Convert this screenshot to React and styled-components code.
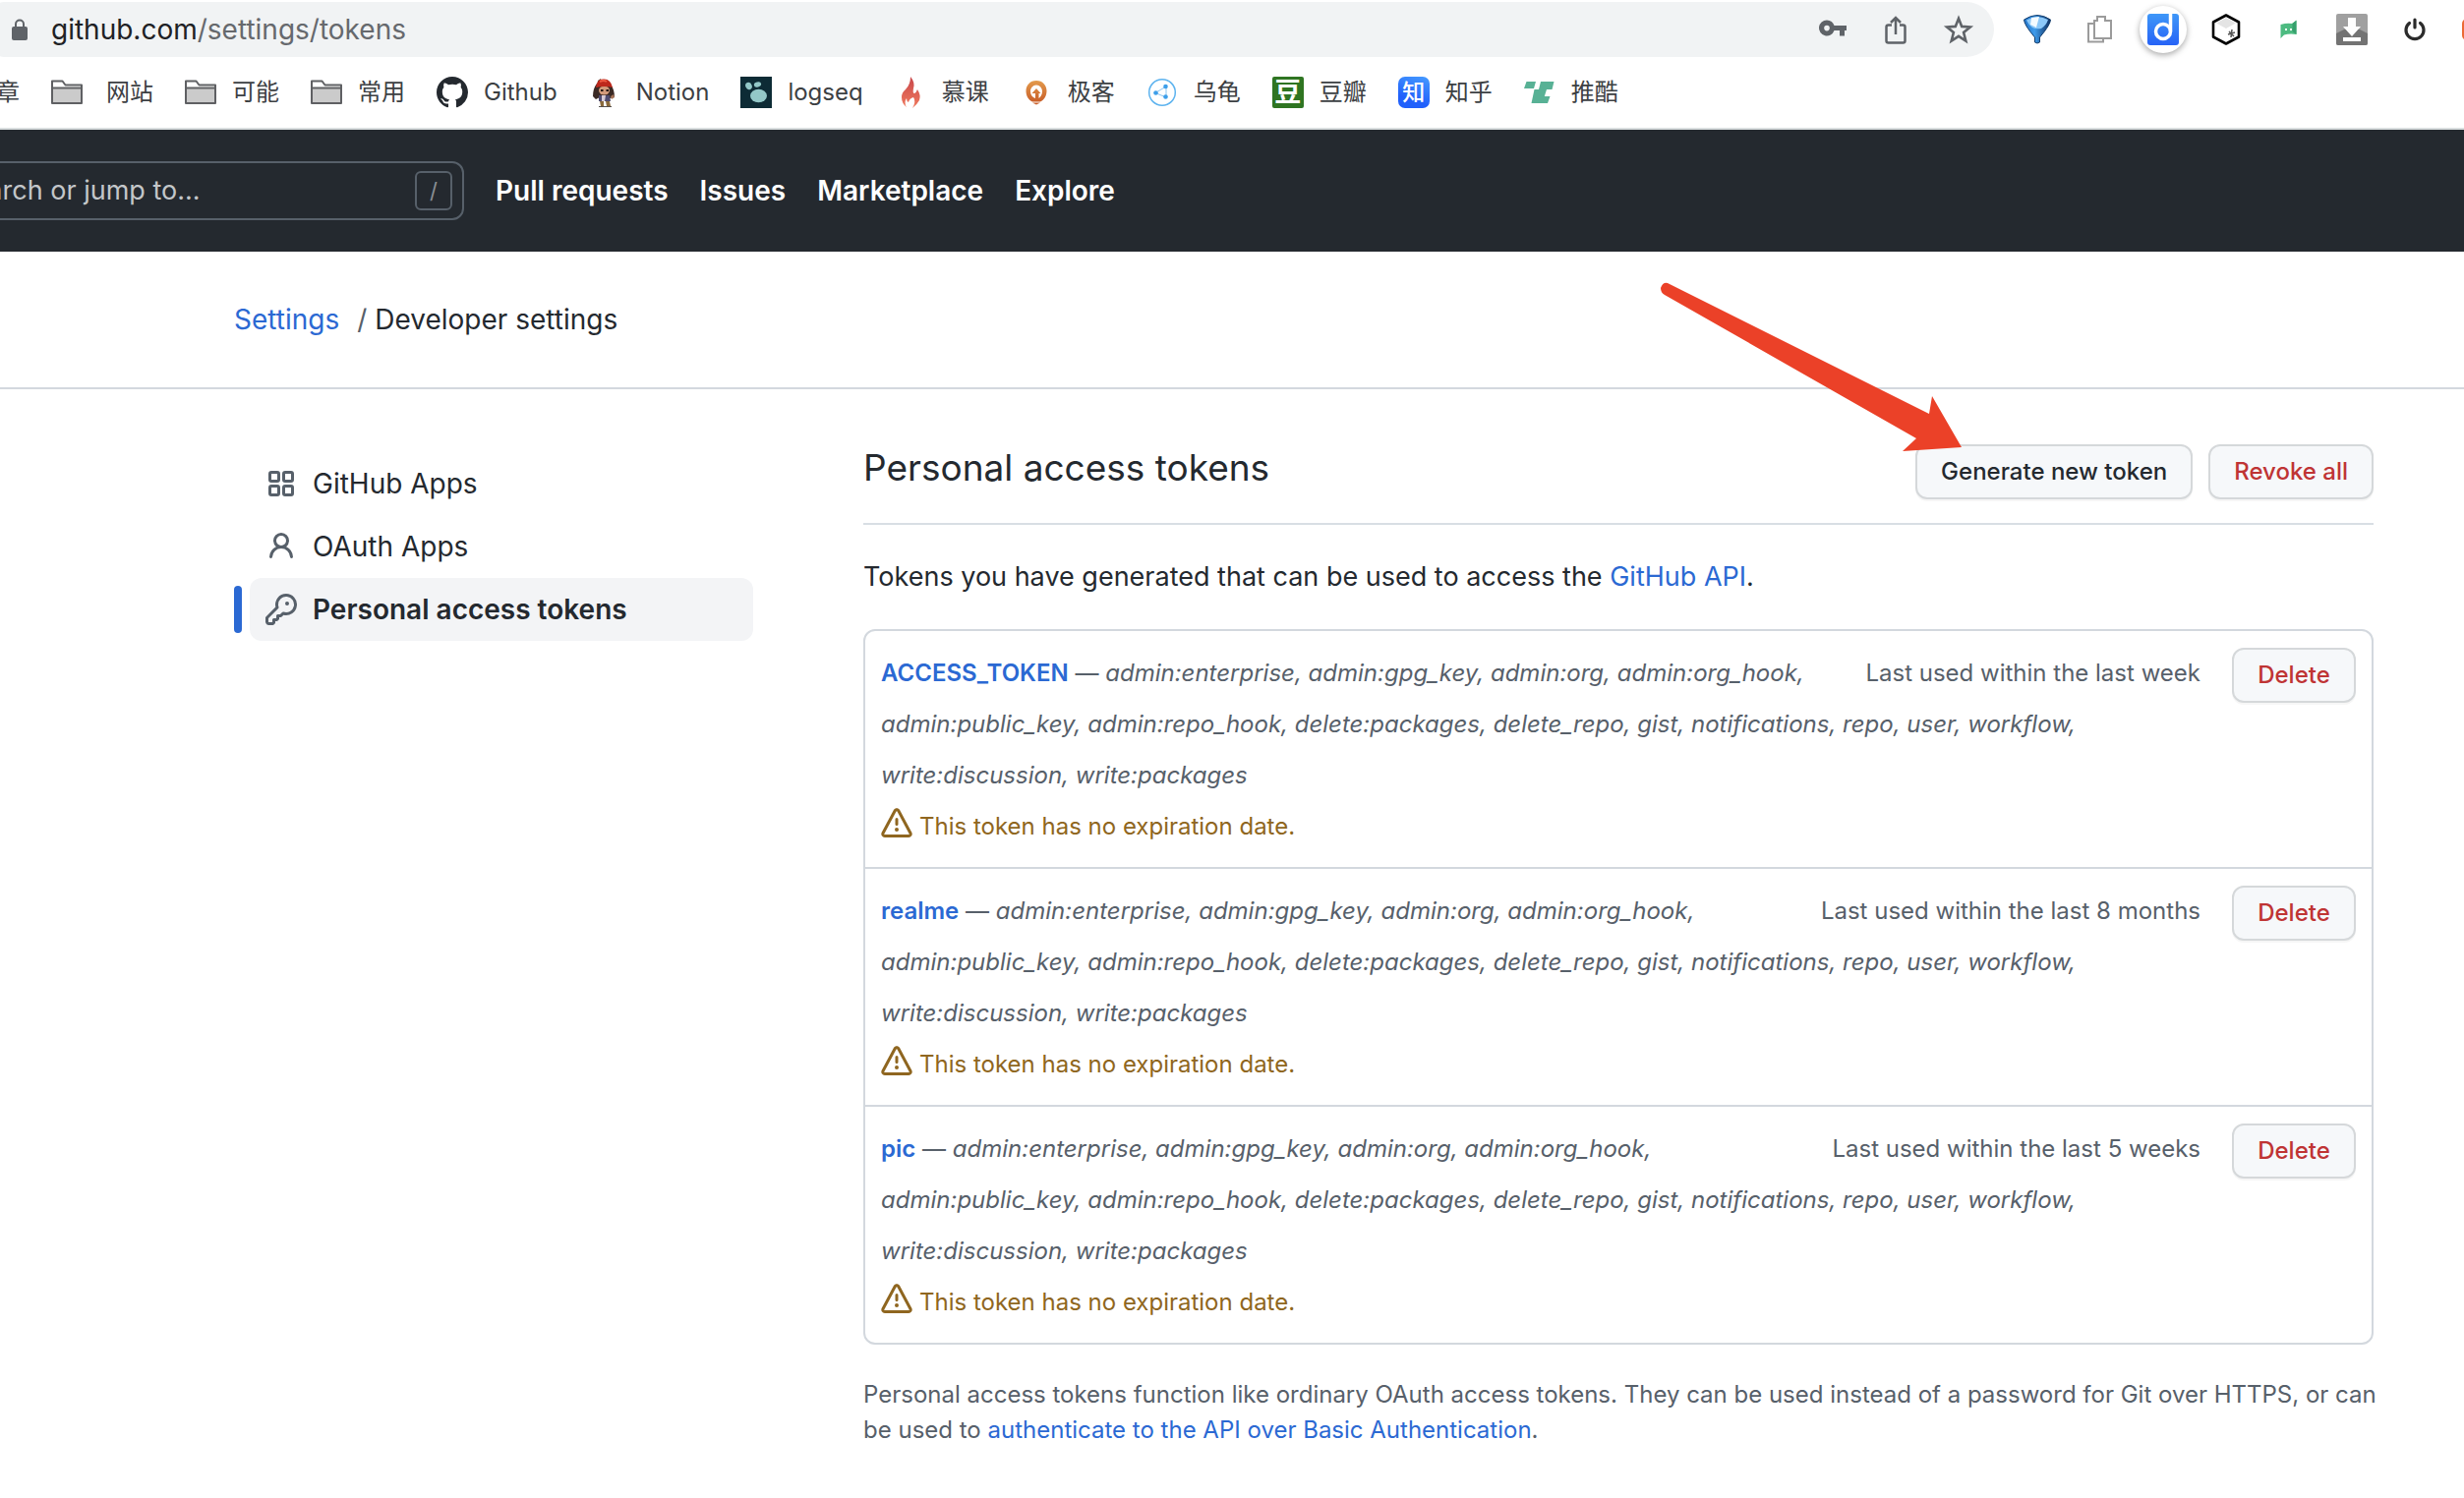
import React from "react";
import styled, { createGlobalStyle, css } from "styled-components";

const color = {
  text: "#24292f",
  muted: "#57606a",
  link: "#2b69d3",
  danger: "#bf3434",
  warning: "#8f6620",
  border: "#d3d8de",
  subtle: "#f6f8fa",
};

const GlobalStyle = createGlobalStyle`
  *, *::before, *::after { box-sizing: border-box; }
  body {
    margin: 0;
    background: #fff;
    color: ${color.text};
    font-family: Inter, "Noto Sans CJK SC", "Liberation Sans", sans-serif;
    font-size: 28px;
    line-height: 42px;
    overflow-x: hidden;
  }
  svg { display: block; flex: none; }
`;

const Icon = styled.svg`
  width: 32px;
  height: 32px;
`;

const IconButton = styled.button`
  display: grid;
  place-items: center;
  flex: none;
  width: ${(p) => (p.$round ? 48 : 32)}px;
  height: ${(p) => (p.$round ? 48 : 32)}px;
  margin: ${(p) => (p.$round ? "0 -8px" : "0")};
  padding: 0;
  border: 0;
  border-radius: ${(p) => (p.$round ? "50%" : "0")};
  background: ${(p) => (p.$round ? "#fff" : "none")};
  box-shadow: ${(p) => (p.$round ? "0 2px 6px rgba(0, 0, 0, 0.35)" : "none")};
`;

/* Browser chrome */

const Chrome = styled.div`
  border-bottom: 2px solid #d9dedf;
  overflow: hidden;
`;

const Toolbar = styled.div`
  display: flex;
  gap: 28px;
  padding-top: 2px;
`;

const AddressBar = styled.div`
  display: flex;
  flex: 1;
  align-items: center;
  height: 56px;
  margin-left: -8px;
  padding: 0 20px 0 12px;
  border-radius: 12px 28px 28px 12px;
  background: #f1f3f4;
`;

const Url = styled.div`
  flex: 1;
  margin-left: 16px;
  color: #202124;
`;

const UrlPath = styled.span`
  color: #66696d;
`;

const AddressActions = styled.div`
  display: flex;
  gap: 32px;
`;

const Extensions = styled.div`
  display: flex;
  align-items: center;
  gap: 32px;
  width: 450px;
`;

const Bookmarks = styled.nav`
  display: flex;
  align-items: center;
  gap: 32px;
  height: 72px;
  margin-left: -4px;
  font-size: 24px;
  line-height: 36px;
`;

const Bookmark = styled.a`
  display: flex;
  align-items: center;
  gap: ${(p) => (p.$wide ? 24 : 16)}px;
  color: #3c4043;
  text-decoration: none;
  white-space: nowrap;
`;

const Tile = styled.span`
  display: grid;
  place-items: center;
  width: 32px;
  height: 32px;
  border-radius: ${(p) => p.$radius}px;
  background: ${(p) => p.$bg};
  color: #fff;
  font-size: ${(p) => p.$font}px;
  font-weight: ${(p) => p.$weight};
  line-height: 32px;
`;

/* Site header */

const Header = styled.header`
  display: flex;
  align-items: center;
  gap: 32px;
  height: 124px;
  background: #24292f;
`;

const Search = styled.label`
  display: flex;
  align-items: center;
  width: 520px;
  height: 60px;
  margin-left: -48px;
  padding: 0 10px 0 0;
  border: 2px solid #57606a;
  border-radius: 12px;
`;

const SearchInput = styled.input`
  flex: 1;
  min-width: 0;
  padding: 0;
  border: 0;
  outline: 0;
  background: none;
  color: #fff;
  font: inherit;
  font-size: 27px;
  &::placeholder {
    color: #c3c6c9;
    opacity: 1;
  }
`;

const SlashKey = styled.kbd`
  display: grid;
  place-items: center;
  width: 38px;
  height: 40px;
  border: 2px solid #57606a;
  border-radius: 6px;
  color: #8b9096;
  font: inherit;
  font-size: 22px;
  line-height: 36px;
`;

const HeaderNav = styled.nav`
  display: flex;
  gap: 32px;
`;

const HeaderLink = styled.a`
  color: #fff;
  font-weight: 600;
  text-decoration: none;
`;

const Link = styled.a`
  color: ${color.link};
  text-decoration: none;
`;

/* Page */

const Crumbs = styled.nav`
  display: flex;
  align-items: center;
  height: 140px;
  padding: 0 238px;
  border-bottom: 2px solid ${color.border};
`;

const CrumbSeparator = styled.span`
  margin: 0 8px 0 18px;
  color: ${color.muted};
`;

const Main = styled.main`
  display: grid;
  grid-template-columns: 528px minmax(0, 1fr);
  gap: 112px;
  align-items: start;
  padding: 48px 92px 48px 238px;
`;

const SideNav = styled.nav`
  display: flex;
  flex-direction: column;
  padding-top: 16px;
`;

const SideRow = styled.div`
  display: flex;
  align-items: center;
  gap: 8px;
  &::before {
    content: "";
    width: 8px;
    height: 48px;
    border-radius: 4px;
    background: ${(p) => (p.$current ? color.link : "transparent")};
  }
`;

const SideLink = styled.a`
  display: flex;
  flex: 1;
  align-items: center;
  gap: 16px;
  height: 64px;
  padding: 0 16px;
  border-radius: 12px;
  color: ${color.text};
  text-decoration: none;
  ${(p) =>
    p.$current &&
    css`
      background: #f3f4f6;
      font-weight: 600;
    `}
  svg {
    color: ${color.muted};
  }
`;

const Subhead = styled.div`
  display: flex;
  align-items: flex-end;
  gap: 16px;
  padding-bottom: 24px;
  border-bottom: 2px solid #d8dee4;
`;

const Title = styled.h1`
  flex: 1;
  margin: 0;
  font-size: 37px;
  font-weight: 400;
  line-height: 64px;
`;

const Pointed = styled.div`
  position: relative;
`;

const Arrow = styled.svg`
  position: absolute;
  top: -170px;
  right: 229px;
  width: 314px;
  height: 182px;
  pointer-events: none;
`;

const Button = styled.button`
  display: block;
  min-width: 126px;
  height: 56px;
  padding: 0 24px;
  border: 2px solid #d5d8da;
  border-radius: 12px;
  background: ${color.subtle};
  box-shadow: 0 2px 0 rgba(27, 31, 36, 0.04);
  color: ${(p) => (p.$danger ? color.danger : color.text)};
  font: inherit;
  font-size: 24px;
  font-weight: 500;
`;

const Intro = styled.p`
  margin: 32px 0;
  font-size: 27px;
`;

const TokenList = styled.ul`
  margin: 0;
  padding: 0;
  border: 2px solid ${color.border};
  border-radius: 12px;
  list-style: none;
`;

const TokenItem = styled.li`
  padding: 17px 16px 15px;
  color: ${color.muted};
  font-size: 24px;
  line-height: 52px;
  & + & {
    border-top: 2px solid ${color.border};
  }
`;

const DeleteSlot = styled.div`
  float: right;
  margin-left: 32px;
`;

const LastUsed = styled.span`
  float: right;
  margin-left: 32px;
`;

const TokenLink = styled(Link)`
  font-weight: 600;
`;

const Warning = styled.div`
  display: flex;
  align-items: center;
  gap: 7px;
  color: ${color.warning};
  svg {
    margin-bottom: 6px;
  }
`;

const Note = styled.p`
  margin: 33px -8px 0 0;
  color: ${color.muted};
  font-size: 24px;
  line-height: 36px;
`;

/* Icons */

const Folder = () => (
  <Icon viewBox="0 0 32 32">
    <path d="M1 27V4.500h10.500l3 4H31V27z" fill="#fff" stroke="#5f6063" strokeWidth="2" strokeLinejoin="round" />
    <path d="M2 12h28v14H2z" fill="#cbcbcb" />
    <path d="M1 11.500h30" stroke="#5f6063" strokeWidth="2" />
  </Icon>
);

const GithubMark = () => (
  <Icon viewBox="0 0 16 16" fill="#24292f">
    <path fillRule="evenodd" d="M8 0C3.58 0 0 3.58 0 8c0 3.540 2.290 6.530 5.470 7.590.4.070.55-.17.55-.38 0-.19-.01-.82-.01-1.490-2.010.37-2.530-.49-2.690-.94-.09-.23-.48-.94-.82-1.130-.28-.15-.68-.52-.01-.53.63-.01 1.080.58 1.230.82.72 1.210 1.870.87 2.330.66.070-.52.28-.87.51-1.070-1.780-.2-3.640-.89-3.640-3.950 0-.87.31-1.590.82-2.150-.08-.2-.36-1.020.08-2.120 0 0 .67-.21 2.200.82.64-.18 1.320-.27 2-.27s1.360.09 2 .27c1.530-1.040 2.200-.82 2.200-.82.44 1.100.16 1.920.08 2.120.51.56.82 1.270.82 2.150 0 3.070-1.870 3.750-3.650 3.950.29.25.54.73.54 1.480 0 1.070-.01 1.930-.01 2.200 0 .21.15.46.55.38A8.010 8.010 0 0 0 16 8c0-4.420-3.580-8-8-8z" />
  </Icon>
);

const Pirate = () => (
  <Icon viewBox="0 0 32 32">
    <path d="M8 7Q4 12 4 20l3 3 4-2 10 1 5-1q0-8-4-13z" fill="#3b2a25" />
    <path d="M9 4l3-2 1 4-5 5z" fill="#6b4638" />
    <ellipse cx="15.500" cy="14" rx="5.500" ry="4.500" fill="#d29b7b" />
    <path d="M7 11Q8 2 15 2.500 22 2 24 11q-8-2-17 0z" fill="#bd281c" />
    <path d="M11 5q4-2 7 0" stroke="#ee5a42" strokeWidth="2" fill="none" />
    <path d="M12 14h2.500m3 0H20" stroke="#21130f" strokeWidth="2" />
    <path d="M10 19h11l1 6H10z" fill="#4e4b70" />
    <path d="M13 19h4l-1 6h-3z" fill="#d6cbd6" />
    <path d="M11 25h4v5h-3zm6 0h4l1 5h-4z" fill="#8a6a3c" />
    <path d="M22 20l3-2 1 3-3 2z" fill="#a8755a" />
    <path d="M10 30.500h13" stroke="#55504d" />
  </Icon>
);

const Paw = () => (
  <Icon viewBox="0 0 32 32">
    <path d="M0 0h32v32H0z" fill="#0d2b35" />
    <g fill="#93c8c8">
      <ellipse cx="8.500" cy="9.500" rx="3.200" ry="3.800" transform="rotate(-25 8.500 9.500)" />
      <ellipse cx="17.500" cy="8" rx="3.700" ry="2.500" transform="rotate(-15 17.500 8)" />
      <ellipse cx="18.500" cy="19.500" rx="8.500" ry="6.800" />
    </g>
  </Icon>
);

const Flame = () => (
  <Icon viewBox="0 0 32 32">
    <defs>
      <linearGradient id="flame" x1="0" y1="0" x2="0" y2="1">
        <stop offset="0" stopColor="#c8474b" />
        <stop offset="1" stopColor="#f07a5e" />
      </linearGradient>
    </defs>
    <path d="M16 0q5 6 3 12-1 5 1 5 2-1 3-4 4 6 2 11-2 4-7 8 4-7 1-11-4 1-5 5-2-1-2-4-3 4 0 9-5-4-5-10 0-5 4-8 5-5 5-13z" fill="url(#flame)" />
  </Icon>
);

const Geek = () => (
  <Icon viewBox="0 0 32 32">
    <defs>
      <linearGradient id="geek" x1="0" y1="0" x2="0" y2="1">
        <stop offset="0" stopColor="#e39a4c" />
        <stop offset="1" stopColor="#c9602a" />
      </linearGradient>
    </defs>
    <path d="M16 4C9.500 4 5.500 9 5.500 14.500c0 5 2.500 9 6.500 11h8c4-2 6.500-6 6.500-11C26.500 9 22.500 4 16 4zm0 4.500c3.500 0 6 3 6 6.500 0 3-1.500 5.500-3.500 7v-5h2L16 12l-4.500 5h3.500v5c-3-1-5-3.500-5-7 0-3.500 2.500-6.500 6-6.500z" fill="url(#geek)" fillRule="evenodd" />
    <path d="M12 26.500h8L16 28.500z" fill="#c9602a" />
  </Icon>
);

const Nodes = () => (
  <Icon viewBox="0 0 32 32">
    <circle cx="16" cy="16" r="13.300" fill="#fff" stroke="#5db3ef" strokeWidth="1.500" />
    <path d="M9 16.500l11-6.500v11z" fill="none" stroke="#8cc5f0" />
    <g fill="#3d9fea">
      <circle cx="9.500" cy="16.500" r="2.300" />
      <circle cx="19.500" cy="10" r="2.300" />
      <circle cx="19.500" cy="20.500" r="2.300" />
    </g>
  </Icon>
);

const Tuiku = () => (
  <Icon viewBox="0 0 32 32" fill="#58b195">
    <path d="M2.500 5h9.500l-2 7H0zM17 5h13.500l-2 8H23l-2.200 7h5.700L24 27H7.500l3-14h4.500z" />
  </Icon>
);

const Lock = () => (
  <Icon viewBox="0 0 32 32">
    <path d="M12 14v-3.500a4 4 0 0 1 8 0V14" fill="none" stroke="#5f6368" strokeWidth="2" />
    <rect x="8" y="13" width="16" height="14" rx="2" fill="#5f6368" />
  </Icon>
);

const KeySolid = () => (
  <Icon viewBox="0 0 32 32" fill="#5f6368">
    <path fillRule="evenodd" d="M10 6.500a8 8 0 1 0 7.500 10.600H23v5.400h5v-5.400h2v-5H17.500A8 8 0 0 0 10 6.500zm0 5.300a2.800 2.800 0 1 1 0 5.600 2.800 2.800 0 0 1 0-5.600z" />
  </Icon>
);

const Share = () => (
  <Icon viewBox="0 0 32 32" fill="none" stroke="#5f6368" strokeWidth="2.500">
    <path d="M12 11.500H8.500a2 2 0 0 0-2 2v14a2 2 0 0 0 2 2h15a2 2 0 0 0 2-2v-14a2 2 0 0 0-2-2H20M16 21V5M11 9l5-5 5 5" />
  </Icon>
);

const Star = () => (
  <Icon viewBox="0 0 32 32">
    <path d="M16 4.800l3.200 8.100 8.600.6-6.700 5.500 2.200 8.500-7.300-4.700-7.300 4.700 2.200-8.500-6.700-5.500 8.600-.6z" fill="none" stroke="#5f6368" strokeWidth="2.600" />
  </Icon>
);

const Funnel = () => (
  <Icon viewBox="0 0 32 32">
    <defs>
      <linearGradient id="funnel">
        <stop offset="0" stopColor="#2474c8" />
        <stop offset=".4" stopColor="#3f9bea" />
        <stop offset="1" stopColor="#0e2f60" />
      </linearGradient>
    </defs>
    <path d="M2.500 6q13.500-9 27 0 0 5-11 18v5q-2.500 2-5 0v-5Q2.500 11 2.500 6z" fill="url(#funnel)" stroke="#16406f" />
    <path d="M5 6.500q11-6 22-.5-2 6-7 9-5 1-9-1-4-3-6-7.500z" fill="#8cc8f8" />
    <path d="M10 4l8-1-3 11-6-3z" fill="#f4fbff" />
  </Icon>
);

const Copy = () => (
  <Icon viewBox="0 0 32 32" fill="#fff" stroke="#9b9b9b" strokeWidth="2">
    <path d="M4 10h15v18.500H4z" />
    <path d="M10 7h3V3h8v4h6v18H10z" />
  </Icon>
);

const DLogo = () => (
  <Icon viewBox="0 0 32 32">
    <defs>
      <linearGradient id="dlogo" x1="0" y1="0" x2="0" y2="1">
        <stop offset="0" stopColor="#3e97f8" />
        <stop offset="1" stopColor="#2763f6" />
      </linearGradient>
    </defs>
    <rect width="32" height="32" rx="3" fill="url(#dlogo)" />
    <circle cx="16" cy="18" r="7.500" fill="none" stroke="#fff" strokeWidth="3.500" />
    <path d="M23.500 0v18" stroke="#fff" strokeWidth="3.500" />
  </Icon>
);

const Hexagon = () => (
  <Icon viewBox="0 0 32 32">
    <path d="M16 1.500l13 7v15l-13 7-13-7v-15z" fill="#fff" stroke="#000" strokeWidth="2.600" strokeLinejoin="round" />
    <path d="M16 4l10 5.500L16 15 6 9.500z" fill="#e4e4e4" />
    <path d="M22 16l-1 8m-3-3l7-2m-6-1l5 5" stroke="#555" strokeWidth="1.500" />
  </Icon>
);

const Flag = () => (
  <Icon viewBox="0 0 32 32">
    <path d="M7.500 11Q14 9 19 10l4.500-3v14q-7-1-12.500.5l-3.500 3.500z" fill="#4dbb81" />
    <path d="M19.500 10l4-3.500V21l-4-3z" fill="#36a06d" />
    <path d="M12 16h2m3 0h2" stroke="#fff" strokeWidth="2" />
  </Icon>
);

const Download = () => (
  <Icon viewBox="0 0 32 32">
    <rect width="32" height="32" rx="2" fill="#a0a0a0" />
    <path d="M0 20l8-4h16l8 4v10a2 2 0 0 1-2 2H2a2 2 0 0 1-2-2z" fill="#737373" />
    <path d="M12 4h8v9h5l-9 10-9-10h5z" fill="#fff" />
    <path d="M7 24h18v4H7z" fill="#fff" />
  </Icon>
);

const Power = () => (
  <Icon viewBox="0 0 32 32" fill="none" stroke="#2b2b2b" strokeWidth="3.200" strokeLinecap="round">
    <path d="M16 6v8M10.500 9.500a9 9 0 1 0 11 0" />
  </Icon>
);

const OrangeTile = () => (
  <Icon viewBox="0 0 32 32">
    <rect y="5" width="32" height="22" rx="5" fill="#ec6a35" />
  </Icon>
);

const Apps = () => (
  <Icon viewBox="0 0 32 32" fill="none" stroke="currentColor" strokeWidth="3">
    <rect x="4.500" y="4.500" width="9" height="9" rx="1.500" />
    <rect x="18.500" y="4.500" width="9" height="9" rx="1.500" />
    <rect x="4.500" y="18.500" width="9" height="9" rx="1.500" />
    <rect x="18.500" y="18.500" width="9" height="9" rx="1.500" />
  </Icon>
);

const Person = () => (
  <Icon viewBox="0 0 16 16" fill="currentColor">
    <path fillRule="evenodd" d="M10.500 5a2.500 2.500 0 1 1-5 0 2.500 2.500 0 0 1 5 0zm.061 3.073a4 4 0 1 0-5.123 0 6.004 6.004 0 0 0-3.431 5.142.75.75 0 0 0 1.498.070 4.500 4.500 0 0 1 8.990 0 .75.75 0 1 0 1.498-.07 6.005 6.005 0 0 0-3.432-5.142z" />
  </Icon>
);

const Key = () => (
  <Icon viewBox="0 0 16 16" fill="currentColor">
    <path fillRule="evenodd" d="M6.500 5.500a4 4 0 1 1 2.731 3.795.75.75 0 0 0-.768.180L7.440 10.500H6.250a.75.75 0 0 0-.75.75v1.190l-.06.060H4.250a.75.75 0 0 0-.75.75v1.190l-.06.060H1.750a.25.25 0 0 1-.25-.25v-1.690l5.024-5.023a.75.75 0 0 0 .181-.768A3.995 3.995 0 0 1 6.500 5.500zm4-5.500a5.500 5.500 0 0 0-5.348 6.788L.22 11.720a.75.75 0 0 0-.22.530v2C0 15.216.784 16 1.750 16h2a.75.75 0 0 0 .53-.22l.5-.5a.75.75 0 0 0 .22-.53V14h.75a.75.75 0 0 0 .53-.22l.5-.5a.75.75 0 0 0 .22-.53V12h.75a.75.75 0 0 0 .53-.22l.932-.932A5.500 5.500 0 1 0 10.500 0zm.5 6a1 1 0 1 0 0-2 1 1 0 0 0 0 2z" />
  </Icon>
);

const Alert = () => (
  <Icon viewBox="0 0 16 16" fill="currentColor">
    <path fillRule="evenodd" d="M8.220 1.754a.25.25 0 0 0-.44 0L1.698 13.132a.25.25 0 0 0 .22.368h12.164a.25.25 0 0 0 .22-.368L8.220 1.754zm-1.763-.707c.659-1.234 2.427-1.234 3.086 0l6.082 11.378A1.750 1.750 0 0 1 14.082 15H1.918a1.750 1.750 0 0 1-1.543-2.575L6.457 1.047zM9 11a1 1 0 1 1-2 0 1 1 0 0 1 2 0zm-.25-5.250a.75.75 0 0 0-1.500 0v2.500a.75.75 0 0 0 1.500 0v-2.500z" />
  </Icon>
);

const bookmarks = [
  { label: "网站", icon: <Folder />, wide: true },
  { label: "可能", icon: <Folder /> },
  { label: "常用", icon: <Folder /> },
  { label: "Github", icon: <GithubMark /> },
  { label: "Notion", icon: <Pirate /> },
  { label: "logseq", icon: <Paw /> },
  { label: "慕课", icon: <Flame /> },
  { label: "极客", icon: <Geek /> },
  { label: "乌龟", icon: <Nodes /> },
  { label: "豆瓣", icon: <Tile $bg="#2f7522" $radius={2} $font={27} $weight={700} aria-hidden="true">豆</Tile> },
  { label: "知乎", icon: <Tile $bg="linear-gradient(20deg, #2160fb 30%, #469cff)" $radius={7} $font={23} $weight={500} aria-hidden="true">知</Tile> },
  { label: "推酷", icon: <Tuiku /> },
];

const extensions = [
  { label: "Filter", icon: <Funnel /> },
  { label: "Copy", icon: <Copy /> },
  { label: "Docs", icon: <DLogo />, round: true },
  { label: "Cube", icon: <Hexagon /> },
  { label: "Chat", icon: <Flag /> },
  { label: "Download", icon: <Download /> },
  { label: "Power", icon: <Power /> },
  { label: "More", icon: <OrangeTile /> },
];

const sideItems = [
  { label: "GitHub Apps", icon: <Apps /> },
  { label: "OAuth Apps", icon: <Person /> },
  { label: "Personal access tokens", icon: <Key />, current: true },
];

const scopes =
  "admin:enterprise, admin:gpg_key, admin:org, admin:org_hook, admin:public_key, admin:repo_hook, delete:packages, delete_repo, gist, notifications, repo, user, workflow, write:discussion, write:packages";

const tokens = [
  { name: "ACCESS_TOKEN", used: "week" },
  { name: "realme", used: "8 months" },
  { name: "pic", used: "5 weeks" },
];

export default function App() {
  return (
    <>
      <GlobalStyle />
      <Chrome>
        <Toolbar>
          <AddressBar>
            <Lock />
            <Url>
              github.com<UrlPath>/settings/tokens</UrlPath>
            </Url>
            <AddressActions>
              <IconButton aria-label="Passwords"><KeySolid /></IconButton>
              <IconButton aria-label="Share"><Share /></IconButton>
              <IconButton aria-label="Bookmark"><Star /></IconButton>
            </AddressActions>
          </AddressBar>
          <Extensions>
            {extensions.map((e) => (
              <IconButton key={e.label} aria-label={e.label} $round={e.round}>
                {e.icon}
              </IconButton>
            ))}
          </Extensions>
        </Toolbar>
        <Bookmarks>
          <Bookmark href="#">章</Bookmark>
          {bookmarks.map((b) => (
            <Bookmark key={b.label} href="#" $wide={b.wide}>
              {b.icon}
              {b.label}
            </Bookmark>
          ))}
        </Bookmarks>
      </Chrome>

      <Header>
        <Search>
          <SearchInput type="text" placeholder="Search or jump to..." aria-label="Search or jump to" />
          <SlashKey>/</SlashKey>
        </Search>
        <HeaderNav>
          <HeaderLink href="#">Pull requests</HeaderLink>
          <HeaderLink href="#">Issues</HeaderLink>
          <HeaderLink href="#">Marketplace</HeaderLink>
          <HeaderLink href="#">Explore</HeaderLink>
        </HeaderNav>
      </Header>

      <Crumbs>
        <Link href="#">Settings</Link>
        <CrumbSeparator>/</CrumbSeparator>
        <span>Developer settings</span>
      </Crumbs>

      <Main>
        <SideNav>
          {sideItems.map((s) => (
            <SideRow key={s.label} $current={s.current}>
              <SideLink href="#" $current={s.current}>
                {s.icon}
                {s.label}
              </SideLink>
            </SideRow>
          ))}
        </SideNav>

        <section>
          <Subhead>
            <Title>Personal access tokens</Title>
            <Pointed>
              <Button>Generate new token</Button>
              <Arrow viewBox="0 0 314 182" aria-hidden="true">
                <path d="M9 6L275 139l3-18 30 52-60 4 14-13L6 18Q2 16 2 11 4 5 9 6z" fill="#eb4128" />
              </Arrow>
            </Pointed>
            <Button $danger>Revoke all</Button>
          </Subhead>
          <Intro>
            Tokens you have generated that can be used to access the <Link href="#">GitHub API</Link>.
          </Intro>
          <TokenList>
            {tokens.map((t) => (
              <TokenItem key={t.name}>
                <DeleteSlot>
                  <Button $danger>Delete</Button>
                </DeleteSlot>
                <LastUsed>Last used within the last {t.used}</LastUsed>
                <TokenLink href="#">{t.name}</TokenLink> — <em>{scopes}</em>
                <Warning>
                  <Alert />
                  This token has no expiration date.
                </Warning>
              </TokenItem>
            ))}
          </TokenList>
          <Note>
            Personal access tokens function like ordinary OAuth access tokens. They can be used instead of a password for
            Git over HTTPS, or can be used to <Link href="#">authenticate to the API over Basic Authentication</Link>.
          </Note>
        </section>
      </Main>
    </>
  );
}
